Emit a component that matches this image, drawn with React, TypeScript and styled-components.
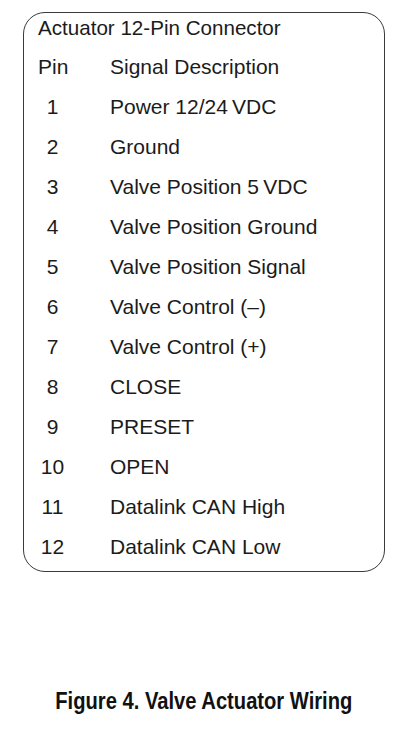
import React from "react";
import styled, { createGlobalStyle } from "styled-components";

const Global = createGlobalStyle`
  html, body { margin: 0; padding: 0; background: #ffffff; }
  body { font-family: "Liberation Sans", Arial, sans-serif; color: #1b1b1b; }
`;

const Page = styled.div`
  width: 400px;
  height: 730px;
  box-sizing: border-box;
  padding: 12px 15px 0 23px;
  display: flex;
  flex-direction: column;
`;

const Card = styled.div`
  width: 362px;
  height: 560px;
  box-sizing: border-box;
  border: 1px solid #3a3a3a;
  border-radius: 22px;
  padding: 3px 0 0 14px;
  display: flex;
  flex-direction: column;
`;

const Title = styled.div`
  font-size: 20.6px;
  line-height: 24px;
  height: 31px;
`;

const Row = styled.div`
  display: grid;
  grid-template-columns: 72px 1fr;
  height: 40px;
  align-items: center;
  font-size: 21px;
`;

const Pin = styled.span<{ $head?: boolean }>`
  display: block;
  width: ${(p) => (p.$head ? "auto" : "29px")};
  text-align: ${(p) => (p.$head ? "left" : "center")};
`;

const Desc = styled.span``;

const Caption = styled.div`
  margin-top: 115px;
  margin-left: -23px;
  width: 400px;
  box-sizing: border-box;
  padding-left: 8px;
  display: flex;
  justify-content: center;
`;

const CaptionText = styled.span`
  display: inline-block;
  font-family: "Liberation Sans", Arial, sans-serif;
  font-weight: 700;
  font-size: 24px;
  color: #111;
  white-space: nowrap;
  transform: scaleX(0.84);
  transform-origin: center;
`;

const rows: [string, string][] = [
  ["1", "Power 12/24\u2009VDC"],
  ["2", "Ground"],
  ["3", "Valve Position 5\u2009VDC"],
  ["4", "Valve Position Ground"],
  ["5", "Valve Position Signal"],
  ["6", "Valve Control (\u2013)"],
  ["7", "Valve Control (+)"],
  ["8", "CLOSE"],
  ["9", "PRESET"],
  ["10", "OPEN"],
  ["11", "Datalink CAN High"],
  ["12", "Datalink CAN Low"],
];

export default function App() {
  return (
    <>
      <Global />
      <Page>
        <Card>
          <Title>Actuator 12-Pin Connector</Title>
          <Row>
            <Pin $head>Pin</Pin>
            <Desc>Signal Description</Desc>
          </Row>
          {rows.map(([p, d]) => (
            <Row key={p}>
              <Pin>{p}</Pin>
              <Desc>{d}</Desc>
            </Row>
          ))}
        </Card>
        <Caption>
          <CaptionText>Figure 4. Valve Actuator Wiring</CaptionText>
        </Caption>
      </Page>
    </>
  );
}
